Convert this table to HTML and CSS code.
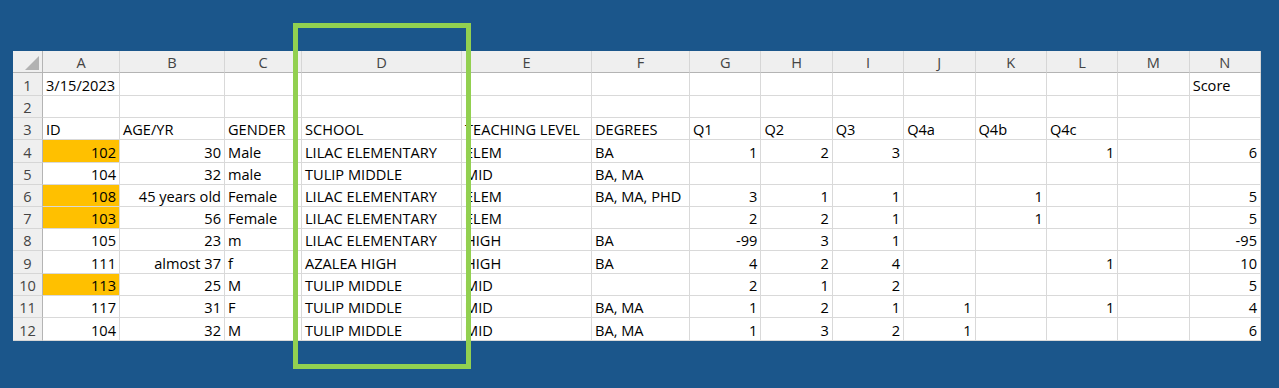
FILE: index.html
```html
<!DOCTYPE html>
<html lang="en">
<head>
<meta charset="utf-8">
<title>Spreadsheet</title>
<link rel="stylesheet" href="styles.css">
</head>
<body>
<div class="stage">
  <div class="sheet">
    <div class="corner"><span class="tri"></span></div>
    <div class="ch">A</div><div class="ch">B</div><div class="ch">C</div><div class="ch">D</div><div class="ch">E</div><div class="ch">F</div><div class="ch">G</div><div class="ch">H</div><div class="ch">I</div><div class="ch">J</div><div class="ch">K</div><div class="ch">L</div><div class="ch">M</div><div class="ch">N</div>

    <div class="rh">1</div><div class="c">3/15/2023</div><div class="c"></div><div class="c"></div><div class="c"></div><div class="c"></div><div class="c"></div><div class="c"></div><div class="c"></div><div class="c"></div><div class="c"></div><div class="c"></div><div class="c"></div><div class="c"></div><div class="c">Score</div>

    <div class="rh">2</div><div class="c"></div><div class="c"></div><div class="c"></div><div class="c"></div><div class="c"></div><div class="c"></div><div class="c"></div><div class="c"></div><div class="c"></div><div class="c"></div><div class="c"></div><div class="c"></div><div class="c"></div><div class="c"></div>

    <div class="rh">3</div><div class="c">ID</div><div class="c">AGE/YR</div><div class="c">GENDER</div><div class="c">SCHOOL</div><div class="c">TEACHING LEVEL</div><div class="c">DEGREES</div><div class="c">Q1</div><div class="c">Q2</div><div class="c">Q3</div><div class="c">Q4a</div><div class="c">Q4b</div><div class="c">Q4c</div><div class="c"></div><div class="c"></div>

    <div class="rh">4</div><div class="c n hl">102</div><div class="c n">30</div><div class="c">Male</div><div class="c">LILAC ELEMENTARY</div><div class="c">ELEM</div><div class="c">BA</div><div class="c n">1</div><div class="c n">2</div><div class="c n">3</div><div class="c"></div><div class="c"></div><div class="c n">1</div><div class="c"></div><div class="c n">6</div>

    <div class="rh">5</div><div class="c n">104</div><div class="c n">32</div><div class="c">male</div><div class="c">TULIP MIDDLE</div><div class="c">MID</div><div class="c">BA, MA</div><div class="c"></div><div class="c"></div><div class="c"></div><div class="c"></div><div class="c"></div><div class="c"></div><div class="c"></div><div class="c"></div>

    <div class="rh">6</div><div class="c n hl">108</div><div class="c n">45 years old</div><div class="c">Female</div><div class="c">LILAC ELEMENTARY</div><div class="c">ELEM</div><div class="c">BA, MA, PHD</div><div class="c n">3</div><div class="c n">1</div><div class="c n">1</div><div class="c"></div><div class="c n">1</div><div class="c"></div><div class="c"></div><div class="c n">5</div>

    <div class="rh">7</div><div class="c n hl">103</div><div class="c n">56</div><div class="c">Female</div><div class="c">LILAC ELEMENTARY</div><div class="c">ELEM</div><div class="c"></div><div class="c n">2</div><div class="c n">2</div><div class="c n">1</div><div class="c"></div><div class="c n">1</div><div class="c"></div><div class="c"></div><div class="c n">5</div>

    <div class="rh">8</div><div class="c n">105</div><div class="c n">23</div><div class="c">m</div><div class="c">LILAC ELEMENTARY</div><div class="c">HIGH</div><div class="c">BA</div><div class="c n">-99</div><div class="c n">3</div><div class="c n">1</div><div class="c"></div><div class="c"></div><div class="c"></div><div class="c"></div><div class="c n">-95</div>

    <div class="rh">9</div><div class="c n">111</div><div class="c n">almost 37</div><div class="c">f</div><div class="c">AZALEA HIGH</div><div class="c">HIGH</div><div class="c">BA</div><div class="c n">4</div><div class="c n">2</div><div class="c n">4</div><div class="c"></div><div class="c"></div><div class="c n">1</div><div class="c"></div><div class="c n">10</div>

    <div class="rh">10</div><div class="c n hl">113</div><div class="c n">25</div><div class="c">M</div><div class="c">TULIP MIDDLE</div><div class="c">MID</div><div class="c"></div><div class="c n">2</div><div class="c n">1</div><div class="c n">2</div><div class="c"></div><div class="c"></div><div class="c"></div><div class="c"></div><div class="c n">5</div>

    <div class="rh">11</div><div class="c n">117</div><div class="c n">31</div><div class="c">F</div><div class="c">TULIP MIDDLE</div><div class="c">MID</div><div class="c">BA, MA</div><div class="c n">1</div><div class="c n">2</div><div class="c n">1</div><div class="c n">1</div><div class="c"></div><div class="c n">1</div><div class="c"></div><div class="c n">4</div>

    <div class="rh">12</div><div class="c n">104</div><div class="c n">32</div><div class="c">M</div><div class="c">TULIP MIDDLE</div><div class="c">MID</div><div class="c">BA, MA</div><div class="c n">1</div><div class="c n">3</div><div class="c n">2</div><div class="c n">1</div><div class="c"></div><div class="c"></div><div class="c"></div><div class="c n">6</div>
  </div>
  <div class="focus" aria-hidden="true"></div>
</div>
</body>
</html>
```
FILE: styles.css
```css
html, body {
  margin: 0;
  padding: 0;
  background: #1b568b;
}

body {
  width: 1279px;
  height: 388px;
  overflow: hidden;
  font-family: "Open Sans", "Noto Sans", sans-serif;
  font-size: 14.6px;
  color: #000;
}

.stage {
  position: relative;
  width: 1279px;
  height: 388px;
  padding: 51px 0 0 13px;
  box-sizing: border-box;
}

.sheet {
  width: 1248px;
  height: 290px;
  background: #fff;
  overflow: hidden;
  display: grid;
  grid-template-columns: 30px 77px 105px 77px 160px 130px 98px repeat(8, 1fr);
  grid-template-rows: 22px 23px 22px 22px 23px 22px 22px 22px 22px 23px 22px 22px 23px;
}

.c,
.ch,
.rh,
.corner {
  box-sizing: border-box;
  border-right: 1px solid #d9d9d9;
  border-bottom: 1px solid #d9d9d9;
  white-space: nowrap;
  overflow: visible;
  min-width: 0;
}

.c {
  display: flex;
  align-items: flex-end;
  padding: 0 3px 1px 3px;
  line-height: 18px;
}

.c.n {
  justify-content: flex-end;
}

.c.hl {
  background: #ffc000;
}

.ch {
  background: #efefef;
  border-bottom: 1px solid #b4b4b4;
  border-right: 1px solid #d6d6d6;
  color: #444;
  display: flex;
  align-items: center;
  justify-content: center;
  line-height: 18px;
}

.rh {
  background: #efefef;
  border-right: 1px solid #b4b4b4;
  border-bottom: 1px solid #d6d6d6;
  color: #444;
  display: flex;
  align-items: flex-end;
  justify-content: center;
  padding-bottom: 1px;
  line-height: 18px;
}

.corner {
  background: #efefef;
  border-right: 1px solid #b4b4b4;
  border-bottom: 1px solid #b4b4b4;
  display: flex;
  align-items: flex-end;
  justify-content: flex-end;
  padding: 0 3px 2px 0;
}

.tri {
  width: 14px;
  height: 14px;
  background: #b2b2b2;
  clip-path: polygon(100% 0, 100% 100%, 0 100%);
}

.focus {
  position: absolute;
  left: 293px;
  top: 23px;
  width: 178px;
  height: 346px;
  box-sizing: border-box;
  border: 5px solid #92d050;
}
```
